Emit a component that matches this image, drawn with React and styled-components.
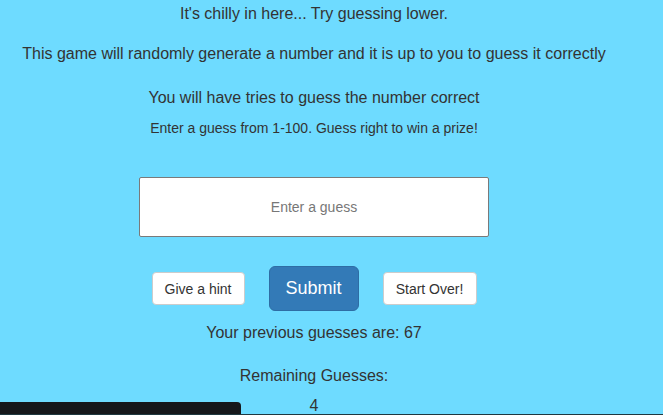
import styled, { createGlobalStyle } from "styled-components";

const GlobalStyle = createGlobalStyle`
  html, body {
    margin: 0;
    padding: 0;
    background: #6edbff;
    height: 100%;
    overflow: hidden;
  }
  body {
    font-family: "Liberation Sans", Arial, sans-serif;
    color: #333;
  }
`;

const Page = styled.div`
  width: 628px;
  padding-top: 4px;
  display: flex;
  flex-direction: column;
  align-items: center;
  text-align: center;
`;

const Line = styled.p`
  margin: ${(p) => p.$top || 0}px 0 0;
  font-size: ${(p) => p.$size || 16}px;
  line-height: ${(p) => (p.$size === 14 ? 18 : 20)}px;
  font-weight: ${(p) => (p.$bold ? 700 : 400)};
`;

const GuessInput = styled.input`
  box-sizing: border-box;
  margin-top: 40px;
  width: 350px;
  height: 60px;
  border: 1px solid #7a7a7a;
  border-radius: 2px;
  background: #fff;
  text-align: center;
  font-family: inherit;
  font-size: 14px;
  color: #555;
  outline: none;
  &::placeholder {
    color: #777;
  }
`;

const ButtonRow = styled.div`
  margin-top: 29px;
  display: flex;
  align-items: center;
  gap: 24px;
`;

const Button = styled.button`
  box-sizing: border-box;
  font-family: inherit;
  cursor: pointer;
  background: ${(p) => (p.$primary ? "#337ab7" : "#fff")};
  color: ${(p) => (p.$primary ? "#fff" : "#333")};
  border: 1px solid ${(p) => (p.$primary ? "#2e6da4" : "#ccc")};
  border-radius: ${(p) => (p.$primary ? 6 : 4)}px;
  font-size: ${(p) => (p.$primary ? 18 : 14)}px;
  height: ${(p) => (p.$primary ? 45 : 33)}px;
  width: ${(p) => p.$w}px;
  padding: 0;
`;

const StatusBar = styled.div`
  position: fixed;
  left: 0;
  bottom: 0;
  width: 241px;
  height: 13px;
  background: #15171b;
  border-top-right-radius: 4px;
`;

const BottomLine = styled.div`
  position: fixed;
  left: 0;
  right: 0;
  bottom: 0;
  height: 1px;
  background: #1f3840;
`;

export default function App() {
  return (
    <>
      <GlobalStyle />
      <Page>
        <Line>It's chilly in here... Try guessing lower.</Line>
        <Line $top={20}>
          This game will randomly generate a number and it is up to you to guess
          it correctly
        </Line>
        <Line $top={24}>You will have tries to guess the number correct</Line>
        <Line $top={11} $size={14}>
          Enter a guess from 1-100. Guess right to win a prize!
        </Line>
        <GuessInput placeholder="Enter a guess" />
        <ButtonRow>
          <Button $w={93}>Give a hint</Button>
          <Button $primary $w={90}>
            Submit
          </Button>
          <Button $w={94}>Start Over!</Button>
        </ButtonRow>
        <Line $top={12}>Your previous guesses are: 67</Line>
        <Line $top={23}>Remaining Guesses:</Line>
        <Line $top={10}>4</Line>
      </Page>
      <StatusBar />
      <BottomLine />
    </>
  );
}
